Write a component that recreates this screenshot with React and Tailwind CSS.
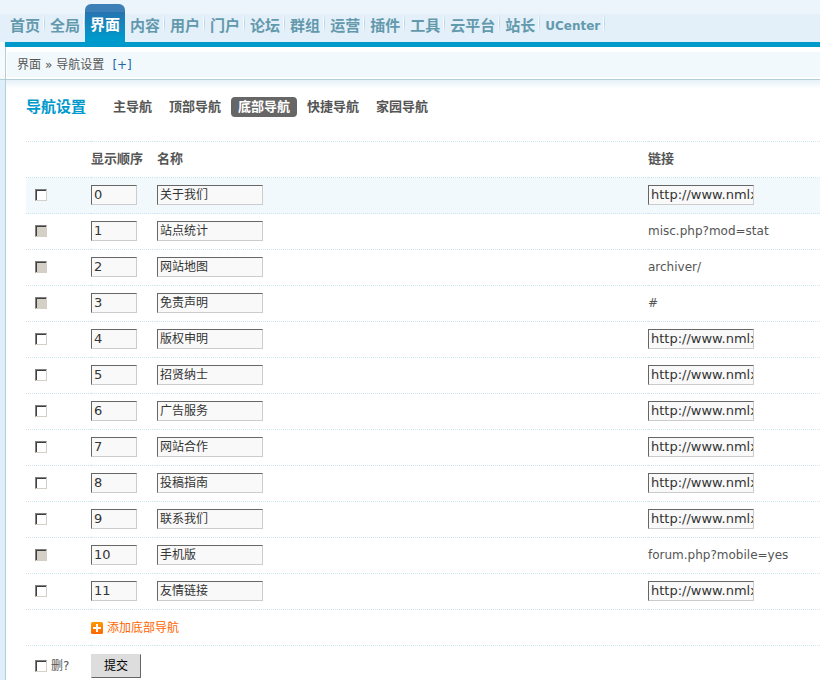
import clsx from 'clsx'

const menus = ['首页', '全局', '界面', '内容', '用户', '门户', '论坛', '群组', '运营', '插件', '工具', '云平台', '站长', 'UCenter']

const tabs = ['主导航', '顶部导航', '底部导航', '快捷导航', '家园导航']

const SITE_URL = 'http://www.nmlx.com/'

// builtin entries cannot be deleted, custom ones have an editable url
const rows = [
  { order: 0, name: '关于我们', active: true },
  { order: 1, name: '站点统计', link: 'misc.php?mod=stat' },
  { order: 2, name: '网站地图', link: 'archiver/' },
  { order: 3, name: '免责声明', link: '#' },
  { order: 4, name: '版权申明' },
  { order: 5, name: '招贤纳士' },
  { order: 6, name: '广告服务' },
  { order: 7, name: '网站合作' },
  { order: 8, name: '投稿指南' },
  { order: 9, name: '联系我们' },
  { order: 10, name: '手机版', link: 'forum.php?mobile=yes' },
  { order: 11, name: '友情链接' },
]

const fieldClass = 'block h-5 border border-t-[#666] border-l-[#666] border-r-[#ccc] border-b-[#ccc] bg-[#f9f9f9] pl-0.5 text-[#333] outline-none'
const rowClass = 'h-9 border-t border-dotted border-[#cde4f1]'

function Checkbox({ className, ...props }) {
  return (
    <input
      type="checkbox"
      className={clsx(
        'block size-3 appearance-none border border-t-[#808080] border-l-[#808080] border-r-[#d4d0c8] border-b-[#d4d0c8] bg-white shadow-[inset_1px_1px_0_#404040] disabled:bg-[#d4d0c8]',
        className
      )}
      {...props}
    />
  )
}

function TopMenu() {
  return (
    <nav className="h-[42px] bg-[linear-gradient(#edf5fc_14px,#e4f0f9_14px)] pl-[5px] pt-1">
      <ul className="flex h-full">
        {menus.map((m) => {
          const active = m === '界面'
          return (
            <li
              key={m}
              className={clsx(
                'flex items-center font-bold',
                m === 'UCenter' ? 'text-xs' : 'text-[15px]',
                active ? 'rounded-t-md bg-[linear-gradient(#3d80b8_8px,#2673b0_8px,#0099cc_90%)] text-white' : 'text-[#6399ad]'
              )}
            >
              <a href="#" className={clsx('whitespace-nowrap pl-[5px] pr-[3px]', active ? 'pt-1' : 'pt-1.5')}>{m}</a>
              <span className={clsx('flex h-5', active && 'invisible')}>
                <span className="w-px bg-linear-to-b from-transparent via-white to-transparent" />
                <span className="w-px bg-linear-to-b from-transparent via-[#b9d6e2] to-transparent" />
              </span>
            </li>
          )
        })}
      </ul>
    </nav>
  )
}

function Breadcrumb() {
  return (
    <div className="border-b border-[#b5cfd9] bg-[#f6fafd] pl-[5px]">
      <div className="border-t-[5px] border-[#0099cc]">
        <div className="border-l border-[#b5cfd9] bg-white pt-[5px] pb-0.5 pl-px">
          <div className="flex h-[25px] items-center bg-[#f2f9fd] pl-[10px] text-xs">
            <span>界面</span>
            <span className="px-1">»</span>
            <span>导航设置</span>
            <a href="#" className="ml-2 text-xs text-[#2366a8]">[+]</a>
          </div>
        </div>
      </div>
    </div>
  )
}

function AddIcon() {
  return (
    <svg viewBox="0 0 12 12" className="size-3" aria-hidden="true">
      <defs>
        <linearGradient id="add" x1="0" y1="0" x2="0" y2="1">
          <stop offset="0" stopColor="#ff9a00" />
          <stop offset="1" stopColor="#ff6600" />
        </linearGradient>
      </defs>
      <rect width="12" height="12" rx="1.5" fill="url(#add)" />
      <path d="M5 2h2v3h3v2H7v3H5V7H2V5h3z" fill="#fff" />
    </svg>
  )
}

function NavTable() {
  return (
    <table className="w-full table-fixed border-collapse text-left text-xs">
      <colgroup>
        <col className="w-[65px]" />
        <col className="w-[66px]" />
        <col />
        <col className="w-[172px]" />
      </colgroup>
      <thead>
        <tr className={clsx(rowClass, 'text-[13px]')}>
          <td />
          <th className="pb-0.5">显示顺序</th>
          <th className="pb-0.5">名称</th>
          <th className="pb-0.5">链接</th>
        </tr>
      </thead>
      <tbody>
        {rows.map((r) => (
          <tr key={r.order} className={clsx(rowClass, r.active && 'bg-[#f2f9fd]')}>
            <td className="pb-0.5 pl-[9px]">
              <Checkbox disabled={!!r.link} aria-label={`删除 ${r.name}`} />
            </td>
            <td className="pb-0.5">
              <input defaultValue={r.order} aria-label="显示顺序" className={clsx(fieldClass, 'w-[46px] text-[13px]')} />
            </td>
            <td className="pb-0.5">
              <input defaultValue={r.name} aria-label="名称" className={clsx(fieldClass, 'w-[106px] pb-0.5 text-xs')} />
            </td>
            <td className="pb-0.5">
              {r.link
                ? r.link
                : <input defaultValue={SITE_URL} aria-label="链接" className={clsx(fieldClass, 'w-[106px] text-[13px]')} />}
            </td>
          </tr>
        ))}
        <tr className={rowClass}>
          <td />
          <td colSpan={3}>
            <a href="#" className="flex w-fit items-center gap-1 text-xs text-[#ff6600]">
              <AddIcon />
              添加底部导航
            </a>
          </td>
        </tr>
        <tr className="border-t border-dotted border-[#cde4f1]">
          <td className="pt-2 pl-[9px]">
            <label className="flex items-center gap-1 text-xs">
              <Checkbox />
              删?
            </label>
          </td>
          <td colSpan={3} className="pt-2">
            <button type="submit" className="block h-6 border border-t-[#ddd] border-l-[#ddd] border-r-[#666] border-b-[#666] bg-[#ddd] px-3 text-xs text-black">
              提交
            </button>
          </td>
        </tr>
      </tbody>
    </table>
  )
}

export default function App() {
  return (
    <div className="flex min-h-screen flex-col bg-white font-['DejaVu_Sans','Noto_Sans_CJK_SC',sans-serif] text-[#555]">
      <TopMenu />
      <Breadcrumb />
      <main className="flex grow bg-[#deeffb] pl-[5px]">
        <form className="grow border-l border-[#b5cfd9] bg-[linear-gradient(#e6f1f9,#fff_9px)] pl-5" onSubmit={(e) => e.preventDefault()}>
          <div className="flex h-[61px] items-start pt-[17px]">
            <h1 className="text-[15px] leading-5 font-bold text-[#0099cc]">导航设置</h1>
            <ul className="ml-5 flex gap-[3px] text-[13px] leading-5 font-bold">
              {tabs.map((t) => (
                <li key={t}>
                  <a href="#" className={clsx('block rounded px-[7px]', t === '底部导航' && 'bg-[#666] text-white')}>{t}</a>
                </li>
              ))}
            </ul>
          </div>
          <NavTable />
        </form>
      </main>
    </div>
  )
}
